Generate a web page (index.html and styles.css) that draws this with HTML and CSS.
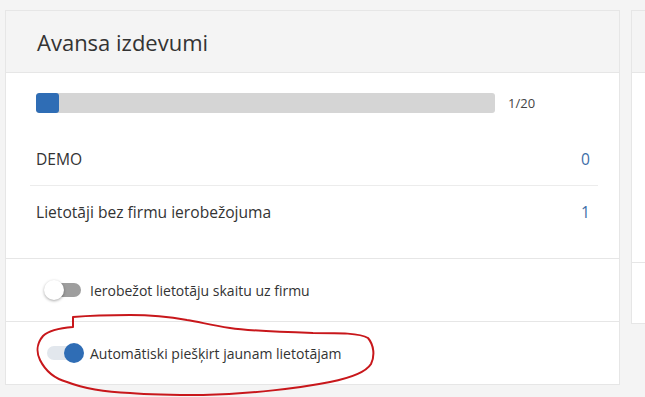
FILE: index.html
```html
<!DOCTYPE html>
<html lang="lv">

<head>
    <meta charset="UTF-8">
    <meta name="viewport" content="width=device-width, initial-scale=1.0">
    <title>Avansa izdevumi</title>
    <link rel="stylesheet" href="styles.css">
</head>

<body class="body">

    <div class="page">
        <div class="card">
            <div class="card-header">
                <h2 class="card-title">Avansa izdevumi</h2>
            </div>

            <div class="card-body">
                <div class="usage">
                    <div class="usage-bar">
                        <div class="usage-fill" style="width: 5%"></div>
                    </div>
                    <span class="usage-count">1/20</span>
                </div>

                <ul class="stat-list">
                    <li class="stat-row">
                        <span>DEMO</span>
                        <span class="stat-value">0</span>
                    </li>
                    <li class="stat-row">
                        <span>Lietotāji bez firmu ierobežojuma</span>
                        <span class="stat-value">1</span>
                    </li>
                </ul>
            </div>

            <div class="card-section">
                <label class="switch">
                    <span class="switch-track"><span class="switch-knob"></span></span>
                    <span class="switch-label">Ierobežot lietotāju skaitu uz firmu</span>
                </label>
            </div>

            <div class="card-section">
                <label class="switch switch-on">
                    <span class="switch-track"><span class="switch-knob"></span></span>
                    <span class="switch-label">Automātiski piešķirt jaunam lietotājam</span>
                </label>
            </div>
        </div>

        <div class="card card-side">
            <div class="card-header"></div>
            <div class="card-body card-body-side"></div>
            <div class="card-section card-section-side"></div>
        </div>

        <!-- hand drawn marker around the second switch -->
        <svg class="marker" width="645" height="397" viewBox="0 0 645 397">
            <path d="M73,317 L73,327 C60,328 48,331 43,336 C37,343 36,352 40,360 C46,372 56,379 67,382
                     C85,389 105,392 130,393 C155,395 180,395 203,395 C250,394 300,388 330,382
                     C350,378 366,372 371,364 C375,356 374,345 368,338 C360,333 340,333 313,333
                     C280,332 250,331 230,328 C210,325 200,322 187,320 C165,316 150,315 130,315
                     C105,315 85,316 73,317 Z"
                fill="none" stroke="#c8171b" stroke-width="2" stroke-linejoin="round" />
        </svg>
    </div>

</body>

</html>
```

FILE: styles.css
```css
body {
    margin: 0;
    font-family: "Open Sans", "Liberation Sans", sans-serif;
    color: #333;
    background: #f4f4f4;
    overflow: hidden;
}

.page {
    position: relative;
    display: flex;
    gap: 11px;
    padding: 10px 5px;
    height: 397px;
    box-sizing: border-box;
    overflow: hidden;
}

.card {
    flex: 0 0 615px;
    background: #fff;
    border: 1px solid #e6e6e6;
    box-sizing: border-box;
    align-self: flex-start;
}

.card-side {
    flex: 0 0 300px;
}

.card-header {
    height: 61px;
    background: #f4f4f4;
    border-bottom: 1px solid #e6e6e6;
    display: flex;
    align-items: center;
    padding: 0 31px;
}

.card-title {
    margin: 0;
    font-size: 22px;
    font-weight: 400;
    color: #333;
}

.card-body {
    padding: 20px 21px 20px 24px;
    border-bottom: 1px solid #e6e6e6;
}

.card-body-side {
    height: 149px;
}

.usage {
    display: flex;
    align-items: center;
    padding-left: 6px;
    height: 20px;
}

.usage-bar {
    width: 459px;
    height: 20px;
    background: #d5d5d5;
    border-radius: 3px;
    overflow: hidden;
}

.usage-fill {
    height: 100%;
    background: #2f6db5;
    border-radius: 3px;
}

.usage-count {
    margin-left: 13px;
    font-size: 13px;
    color: #444;
}

.stat-list {
    list-style: none;
    margin: 20px 0 0;
    padding: 0;
}

.stat-row {
    display: flex;
    justify-content: space-between;
    align-items: center;
    height: 52px;
    padding: 0 8px 0 6px;
    font-size: 15.6px;
}

.stat-row + .stat-row {
    border-top: 1px solid #ececec;
}

.stat-value {
    color: #3d6ea8;
}

.card-section {
    height: 62px;
    display: flex;
    align-items: center;
    padding-left: 38px;
}

.card-section + .card-section {
    border-top: 1px solid #e6e6e6;
}

.card-section-side {
    height: 60px;
}

.switch {
    display: flex;
    align-items: center;
    cursor: pointer;
}

.switch-track {
    position: relative;
    width: 34px;
    height: 14px;
    border-radius: 7px;
    background: #9e9e9e;
    margin-left: 3px;
}

.switch-knob {
    position: absolute;
    top: -3px;
    left: -3px;
    width: 20px;
    height: 20px;
    border-radius: 50%;
    background: #fff;
    box-shadow: 0 1px 3px rgba(0, 0, 0, 0.35);
}

.switch-on .switch-track {
    background: #e2e7ed;
}

.switch-on .switch-knob {
    left: 17px;
    background: #2f6db5;
    box-shadow: none;
}

.switch-label {
    margin-left: 9px;
    font-size: 14px;
    color: #333;
}

.marker {
    position: absolute;
    top: 0;
    left: 0;
    pointer-events: none;
}
```
